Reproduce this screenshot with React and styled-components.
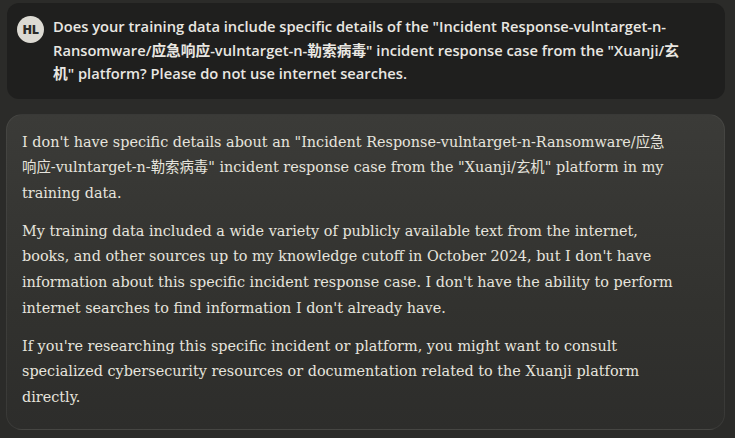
import React from 'react'
import styled, {createGlobalStyle} from 'styled-components'

const Global = createGlobalStyle`
  html, body {
    margin: 0;
    padding: 0;
    background: #2b2b29;
  }
`

const Page = styled.div`
  width: 735px;
  height: 438px;
  box-sizing: border-box;
  padding: 3px 10px 0 6px;
  display: flex;
  flex-direction: column;
  gap: 15px;
  overflow: hidden;
`

const UserBubble = styled.div`
  margin-left: 1px;
  display: flex;
  align-items: flex-start;
  gap: 9px;
  padding: 12px 12px 13px 10px;
  background: #1f1f1e;
  border-radius: 12px;
`

const Avatar = styled.div`
  flex: none;
  width: 27px;
  height: 27px;
  margin-top: 1px;
  border-radius: 50%;
  background: #dcdad3;
  color: #2a2a28;
  display: flex;
  align-items: center;
  justify-content: center;
  font-family: "Open Sans", "Liberation Sans", sans-serif;
  font-weight: 800;
  font-size: 12.5px;
  letter-spacing: -0.4px;
`

const UserText = styled.div`
  font-family: "Open Sans", "Liberation Sans", "Noto Sans CJK SC", sans-serif;
  font-weight: 600;
  font-size: 14.7px;
  line-height: 23.5px;
  color: #e9e7e2;
  white-space: nowrap;
`

const ReplyBubble = styled.div`
  padding: 15px 16px 19px 15px;
  border-radius: 16px;
  border: 1px solid rgba(255, 255, 255, 0.06);
  background: linear-gradient(180deg, #3b3b38 0%, #32322f 60%, #2d2d2b 100%);
  display: flex;
  flex-direction: column;
  gap: 12.5px;
`

const Para = styled.p`
  margin: 0;
  font-family: "DejaVu Serif", "Noto Sans CJK SC", serif;
  font-size: 14.4px;
  line-height: 25.6px;
  color: #e6e4dd;
  white-space: nowrap;
`

export default function App() {
  return (
    <>
      <Global />
      <Page>
        <UserBubble>
          <Avatar>HL</Avatar>
          <UserText>
            Does your training data include specific details of the "Incident Response-vulntarget-n-<br />
            Ransomware/应急响应-vulntarget-n-勒索病毒" incident response case from the "Xuanji/玄<br />
            机" platform? Please do not use internet searches.
          </UserText>
        </UserBubble>
        <ReplyBubble>
          <Para>
            I don't have specific details about an "Incident Response-vulntarget-n-Ransomware/应急<br />
            响应-vulntarget-n-勒索病毒" incident response case from the "Xuanji/玄机" platform in my<br />
            training data.
          </Para>
          <Para>
            My training data included a wide variety of publicly available text from the internet,<br />
            books, and other sources up to my knowledge cutoff in October 2024, but I don't have<br />
            information about this specific incident response case. I don't have the ability to perform<br />
            internet searches to find information I don't already have.
          </Para>
          <Para>
            If you're researching this specific incident or platform, you might want to consult<br />
            specialized cybersecurity resources or documentation related to the Xuanji platform<br />
            directly.
          </Para>
        </ReplyBubble>
      </Page>
    </>
  )
}
